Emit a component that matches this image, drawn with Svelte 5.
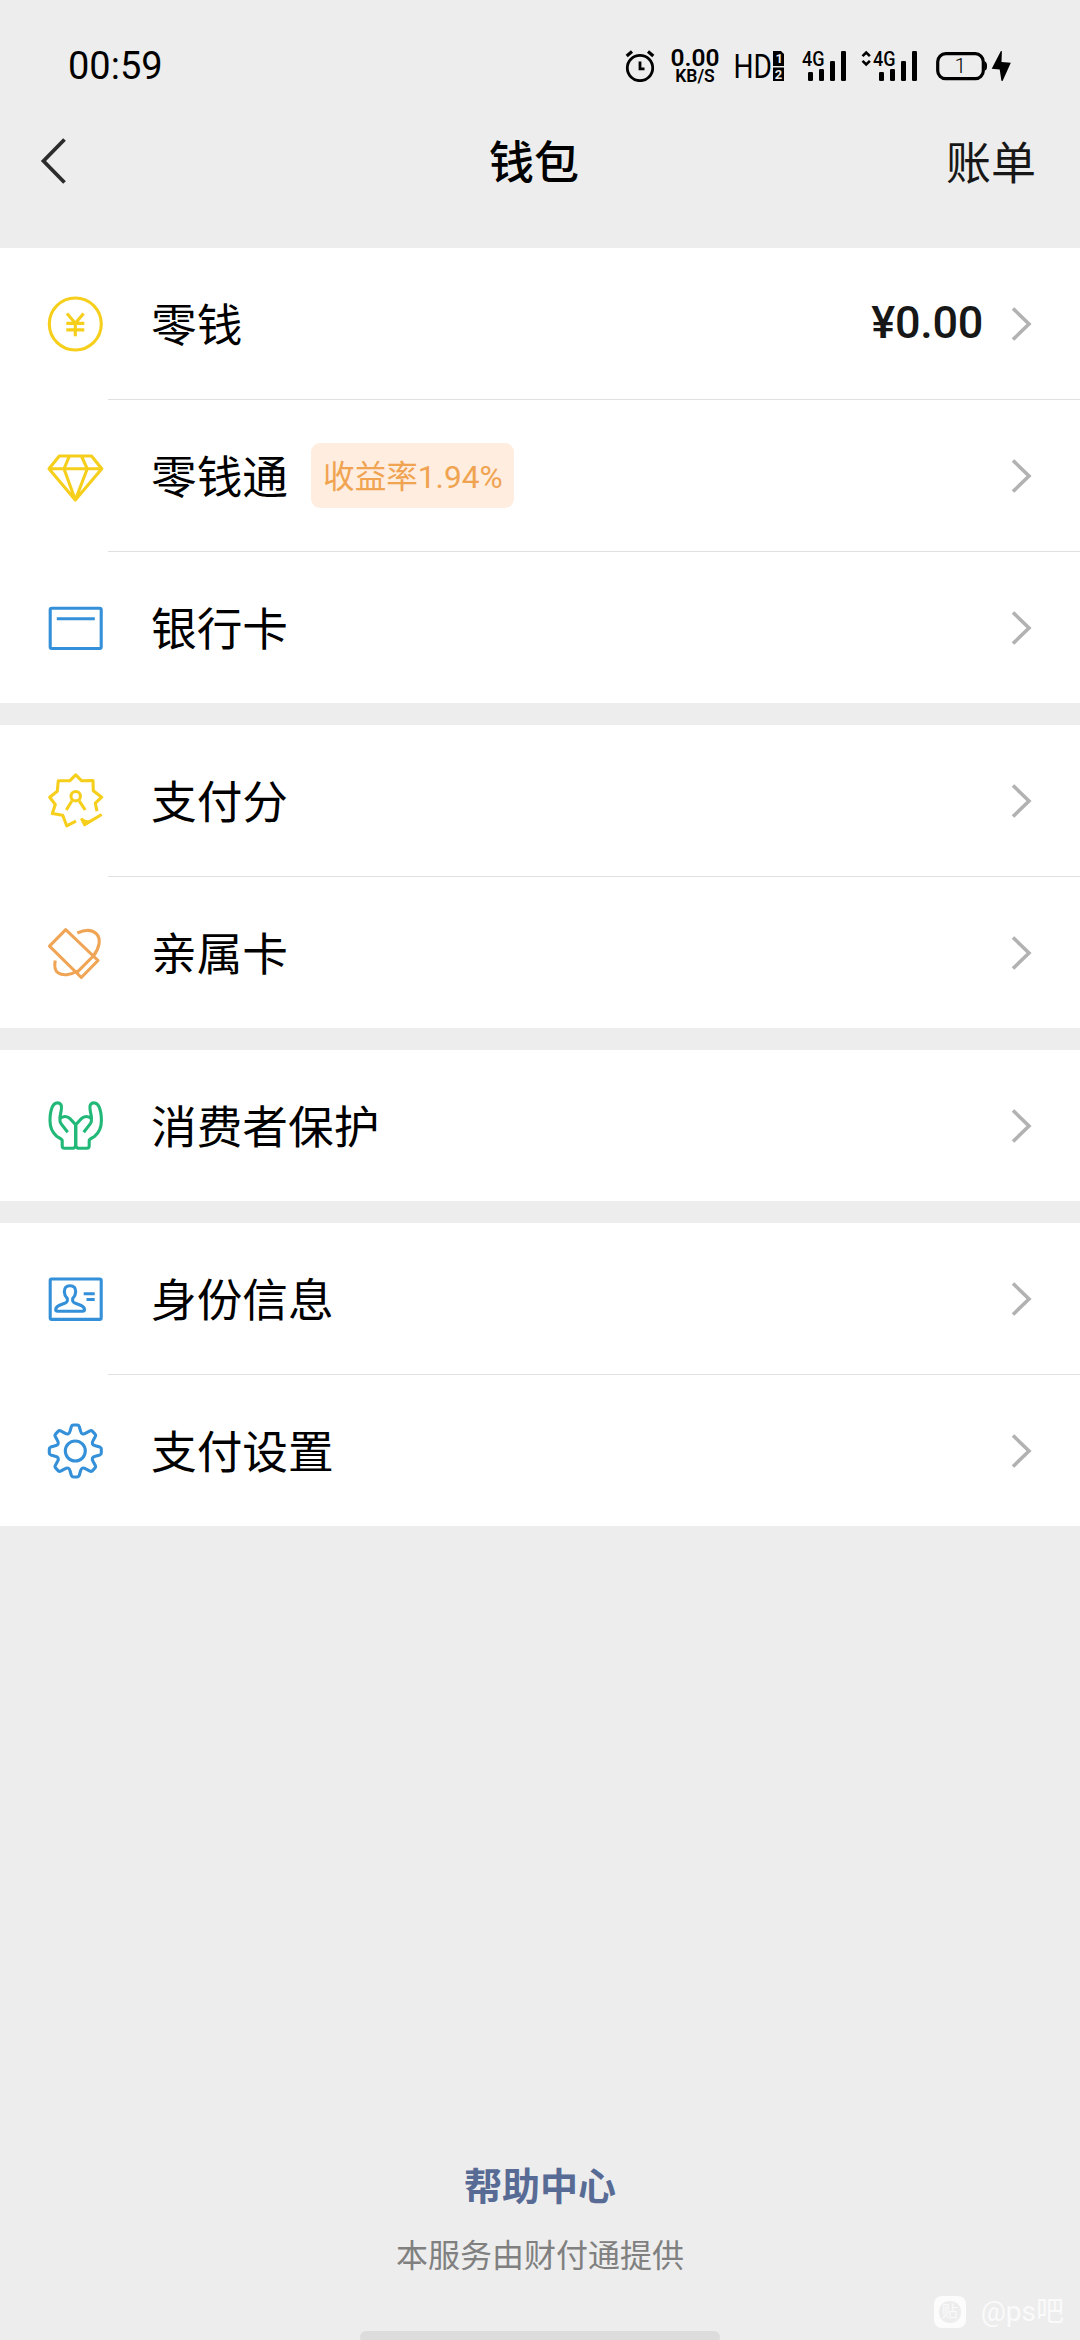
<script>
  const groups = [
    [
      { icon: 'coin', label: '零钱', value: '¥0.00' },
      { icon: 'diamond', label: '零钱通', badge: '收益率1.94%' },
      { icon: 'card', label: '银行卡' }
    ],
    [
      { icon: 'score', label: '支付分' },
      { icon: 'family', label: '亲属卡' }
    ],
    [{ icon: 'hands', label: '消费者保护' }],
    [
      { icon: 'identity', label: '身份信息' },
      { icon: 'gear', label: '支付设置' }
    ]
  ];

  // Eight-toothed gear outline around the centre of the 60px icon box.
  function gearPath() {
    const c = 30.3;
    const at = (i, x, y) => {
      const a = (i * Math.PI) / 4;
      const px = c + x * Math.cos(a) - y * Math.sin(a);
      const py = c - 0.3 + x * Math.sin(a) + y * Math.cos(a);
      return `${px.toFixed(2)} ${py.toFixed(2)}`;
    };
    let d = '';
    for (let i = 0; i < 8; i++) {
      d += `${i ? 'L' : 'M'}${at(i, -5.2, -20)} L${at(i, -3.9, -24.6)} Q${at(i, -3.4, -26)} ${at(i, -2, -26)}`;
      d += ` L${at(i, 2, -26)} Q${at(i, 3.4, -26)} ${at(i, 3.9, -24.6)} L${at(i, 5.2, -20)}`;
      d += ` Q${at(i + 0.5, 0, -16.6)} ${at(i + 1, -5.2, -20)} `;
    }
    return d + 'Z';
  }
  const gear = gearPath();
</script>

{#snippet signal(arrows)}
  <svg class="signal" class:wide={arrows} viewBox={arrows ? '-12 -6 57 44' : '0 -6 45 44'}>
    {#if arrows}
      <path d="M-10.5 6.2l3.7-3.7 3.7 3.7M-10.5 10.8l3.7 3.7 3.7-3.7" fill="none" stroke="#000" stroke-width="2.6" />
    {/if}
    <text x="0" y="15.5" font-size="20" textLength="22.5" lengthAdjust="spacingAndGlyphs" class="med">4G</text>
    <rect x="6" y="22" width="5" height="9" rx="1.3" />
    <rect x="17" y="19" width="5" height="12" rx="1.3" />
    <rect x="28" y="11" width="5" height="20" rx="1.3" />
    <rect x="39" y="1" width="5" height="30" rx="1.3" />
  </svg>
{/snippet}

{#snippet hand()}
  <path d="M30.7 28.8V50.5L28.8 52.2H19.5Q17.2 52.2 17.2 49.7V44.5C17.2 43.3 14.5 42.2 11.7 40.2C7.5 36.7 5 31 5 24.5C5 19 5.7 14.5 7.3 10.8C9.3 6.5 13.8 5.7 15.9 8.7C17.7 11.5 15.3 17 14.9 21.8C14.7 24.5 15 26.3 16 27.6L22.7 36.2M15 22.8C17.5 19.7 22.3 19.7 25 22.6L30.7 28.8" />
{/snippet}

<div class="screen">
  <div class="status">
    <span class="time">00:59</span>
    <div class="indicators">
      <svg class="alarm" viewBox="0 0 30 32">
        <g fill="none" stroke="#000">
          <circle cx="15" cy="18" r="12.7" stroke-width="2.8" />
          <path d="M15 11.5v7.3h4.5" stroke-width="2.8" />
          <path d="M1.7 6l5.3-4.4M28.3 6l-5.3-4.4" stroke-width="3.2" />
        </g>
      </svg>
      <div class="speed"><span>0.00</span><small>KB/S</small></div>
      <svg class="hd" viewBox="-3 -6 53 44">
        <text x="-1.5" y="28" font-size="33.5" textLength="38.5" lengthAdjust="spacingAndGlyphs">HD</text>
        <path d="M38 1h8l3 3v12H38zM38 17.5h11V31H38z" />
        <text x="40.4" y="13.2" font-size="13" class="inv">1</text>
        <text x="39.8" y="29" font-size="13" class="inv">2</text>
      </svg>
      {@render signal(false)}
      {@render signal(true)}
      <svg class="battery" viewBox="0 0 76 32">
        <rect x="1.7" y="3.7" width="45.6" height="25" rx="8" fill="none" stroke="#000" stroke-width="3.2" />
        <path d="M48.5 11.5q2.5 0 2.5 4.5t-2.5 4.5z" />
        <text x="24.4" y="23" font-size="21" text-anchor="middle" class="light">1</text>
        <path d="M64.9 1l1 .3-.4 10.8 9.3.6L66.6 31l-1.2-.2-1.7-11.3-8-.8z" />
      </svg>
    </div>
  </div>

  <header>
    <svg class="back" viewBox="0 0 30 50">
      <path d="M26.5 2.5L5.5 24l21 21.5" fill="none" stroke="#2c2c2c" stroke-width="3.8" />
    </svg>
    <h1>钱包</h1>
    <span class="bill">账单</span>
  </header>

  <main>
    {#each groups as rows}
      <section>
        {#each rows as row}
          <div class="row">
            <svg class="icon {row.icon}" viewBox="0 0 60 60">
              {#if row.icon === 'coin'}
                <circle cx="30.3" cy="30" r="26" />
                <path d="M22 19.5l8.3 9.7 8.3-9.7M30.3 29.2v13M21.3 29.4h18M21.3 35.9h18" />
              {:else if row.icon === 'diamond'}
                <path d="M14.3 10h32.2l10.3 12.8L30.3 54 4 22.8zM4 22.8h52.8M24.4 10L19 22.8 30.3 54l12-31.2L36.4 10" />
              {:else if row.icon === 'card'}
                <rect x="5.2" y="10.2" width="51" height="40.3" rx="1.5" />
                <path d="M11.8 20.8h38" />
              {:else if row.icon === 'score'}
                <path d="M52 40.2l-1.7-8 6.4-6-8.4-6.4-.3-10.3-11.3.3-6-6-6 6-11.4 0-1 10.4-7.6 6 5.6 7.3-3 9 10.4 1.7 4 10.6 9.3-4.6" />
                <circle cx="30.7" cy="25.2" r="4.7" />
                <path d="M27 29.8L21.3 39M34.2 29.8L40.2 39" />
                <path d="M36.5 47.5l3.2 6.2 17-10.2" />
                <path class="solid" d="M35.5 47l3.8 8.3 8-5.3-6-1z" />
              {:else if row.icon === 'family'}
                <path d="M20.7 6.7L53 37.5 36.3 54.5 4.5 23.2zM48.3 33L31.5 49.8" />
                <path d="M32.3 10c8-3.6 15-3.2 19.2.8 4.6 4.7 3.3 14-3 22M10.2 37.5c-1 6-.2 10.3 2.8 12.3 4.6 3.2 12.3 2.5 19.5-1.8" />
              {:else if row.icon === 'hands'}
                {@render hand()}
                <g transform="matrix(-1 0 0 1 61.4 0)">{@render hand()}</g>
              {:else if row.icon === 'identity'}
                <rect x="5.2" y="10" width="51" height="40.4" rx="1.5" />
                <path d="M22.3 29.5c-2.3-2.5-3-4.7-3-6.7 0-4 2.3-6 5.7-6s5.7 2 5.7 6c0 2-.7 4.2-3 6.7-.5 3 .3 4 3.3 5 5.5 1.7 8.5 3 8.5 6q0 1.700-2 1.700H12.700q-2 0-2-1.700c0-3 3-4.300 8.300-6 3-1 3.800-2 3.300-5z" />
                <path d="M38.7 24.7h11M41.5 30.5h8.2" />
              {:else}
                <path d={gear} />
                <circle cx="30.3" cy="30" r="10" />
              {/if}
            </svg>
            <div class="body">
              <span class="label">{row.label}</span>
              {#if row.badge}<span class="badge">{row.badge}</span>{/if}
              {#if row.value}<span class="value">{row.value}</span>{/if}
            </div>
            <svg class="chevron" viewBox="0 0 22 36">
              <path d="M3 2.5L19 18 3 33.5" fill="none" stroke="#b2b2b2" stroke-width="3.6" />
            </svg>
          </div>
        {/each}
      </section>
    {/each}
  </main>

  <footer>
    <span class="help">帮助中心</span>
    <span class="provider">本服务由财付通提供</span>
    <div class="handle"></div>
  </footer>

  <div class="watermark">
    <span class="logo"><span>贴</span></span>
    <span>@ps吧</span>
  </div>
</div>

<style>
  :global(body) { background: #ededed; }
  .screen {
    position: relative;
    display: flex;
    flex-direction: column;
    box-sizing: border-box;
    width: 1080px;
    height: 2340px;
    overflow: hidden;
    background: #ededed;
    color: #000;
    font-family: Roboto, "Noto Sans CJK SC", sans-serif;
  }
  svg { display: block; flex: none; }
  .status {
    display: flex;
    flex: none;
    justify-content: space-between;
    align-items: center;
    height: 132px;
    box-sizing: border-box;
    padding: 0 68px;
  }
  .time { font-size: 38px; line-height: 44px; }
  .indicators { display: flex; align-items: center; height: 44px; }
  .alarm { width: 30px; height: 32px; }
  .speed {
    display: flex;
    flex-direction: column;
    align-items: center;
    width: 50px;
    margin-left: 15px;
    font-weight: 600;
  }
  .speed span { font-size: 24.5px; line-height: 20px; }
  .speed small { font-size: 17.5px; line-height: 15px; padding-top: 1px; }
  .hd { width: 53px; height: 44px; margin-left: 12px; }
  .signal { width: 45px; height: 44px; margin-left: 17px; }
  .signal.wide { width: 57px; margin-left: 14px; }
  .battery { width: 76px; height: 32px; margin-left: 18px; }
  .med { font-weight: 500; }
  .light { font-weight: 300; }
  .inv { fill: #ededed; font-weight: 700; }

  header {
    display: grid;
    flex: none;
    box-sizing: border-box;
    grid-template-columns: 1fr auto 1fr;
    align-items: center;
    height: 116px;
    padding: 0 44px 56px 38px;
  }
  .back { width: 30px; height: 50px; }
  h1 {
    margin: 0;
    padding: 4px 6px 0 0;
    font-size: 45px;
    line-height: 56px;
    font-weight: 500;
  }
  .bill { justify-self: end; padding-top: 6px; font-size: 45px; line-height: 54px; color: #171717; }

  main { display: flex; flex-direction: column; gap: 22px; }
  section { background: #fff; }
  .row { display: flex; align-items: center; box-sizing: border-box; height: 151px; position: relative; }
  .row + .row { height: 152px; padding-top: 1px; }
  .row + .row::before {
    content: "";
    position: absolute;
    top: 0;
    left: 108px;
    right: 0;
    height: 1px;
    background: #e0e0e0;
  }
  .icon {
    width: 60px;
    height: 60px;
    margin-left: 45px;
    fill: none;
    stroke: currentColor;
    stroke-width: 3.1;
    stroke-linejoin: round;
  }
  .coin, .diamond, .score { color: #f6cf1c; }
  .card, .identity, .gear { color: #3490d8; }
  .family { color: #f0a556; }
  .hands { color: #22b978; }
  .solid { fill: currentColor; stroke: none; }
  .body { display: flex; align-items: center; flex: 1; padding-left: 46px; }
  .label { padding-top: 6px; font-size: 45.7px; line-height: 66px; }
  .badge {
    box-sizing: border-box;
    height: 65px;
    margin-left: 23px;
    padding: 2px 11px 0 12px;
    border-radius: 9px;
    background: #ffeddf;
    color: #f0a350;
    font-size: 31.6px;
    line-height: 65px;
  }
  .value {
    margin-left: auto;
    padding-bottom: 2px;
    color: #171717;
    font-size: 45px;
    font-weight: 500;
    line-height: 60px;
    letter-spacing: -0.3px;
  }
  .chevron { width: 22px; height: 36px; margin: 0 48px 0 27px; }

  footer {
    display: flex;
    flex-direction: column;
    align-items: center;
    margin-top: auto;
    height: 181px;
    overflow: hidden;
  }
  .help { font-size: 38px; line-height: 56px; font-weight: 700; color: #576b95; }
  .provider { margin-top: 18px; font-size: 32px; line-height: 46px; color: #808080; }
  .handle { width: 360px; height: 12px; flex: none; margin-top: 52px; border-radius: 6px; background: #dcdcdc; }

  .watermark {
    position: absolute;
    right: 16px;
    bottom: 8px;
    display: flex;
    align-items: center;
    gap: 15px;
    color: #fafafa;
    font-size: 28px;
    line-height: 40px;
  }
  .logo {
    display: grid;
    place-items: center;
    width: 32px;
    height: 32px;
    border-radius: 8px;
    background: #fcfcfc;
  }
  .logo span {
    width: 22px;
    height: 22px;
    border-radius: 10px;
    background: #ededed;
    font-size: 16px;
    line-height: 22px;
    text-align: center;
  }
</style>
